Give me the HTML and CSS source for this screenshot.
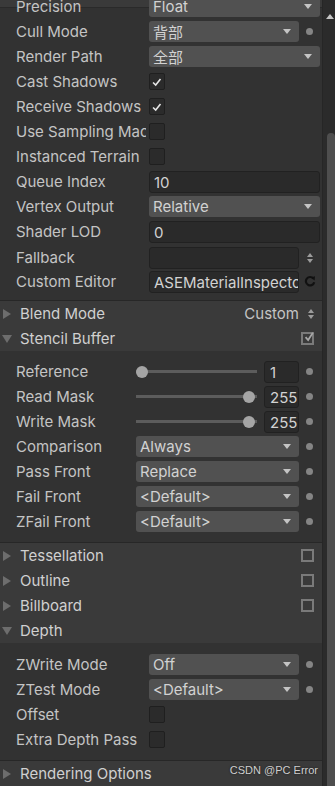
FILE: index.html
```html
<!DOCTYPE html>
<html lang="en">
<head>
  <meta charset="UTF-8">
  <meta name="viewport" content="width=device-width, initial-scale=1.0">
  <title>Shader Options</title>
  <link rel="stylesheet" href="styles.css">
</head>
<body>
  <div class="inspector">
    <div class="panel">
      <div class="section top">
        <div class="row"><span class="label">Precision</span><div class="dropdown"><span>Float</span></div></div>
        <div class="row"><span class="label">Cull Mode</span><div class="dropdown"><span class="cjk">背部</span></div><span class="dot-slot"><i class="dot"></i></span></div>
        <div class="row"><span class="label">Render Path</span><div class="dropdown"><span class="cjk">全部</span></div></div>
        <div class="row"><span class="label">Cast Shadows</span><span class="check on"><svg viewBox="0 0 16 16" width="14" height="14"><polyline points="3.5,8.5 6.5,11.5 12,4.5" /></svg></span></div>
        <div class="row"><span class="label">Receive Shadows</span><span class="check on"><svg viewBox="0 0 16 16" width="14" height="14"><polyline points="3.5,8.5 6.5,11.5 12,4.5" /></svg></span></div>
        <div class="row"><span class="label">Use Sampling Macros</span><span class="check"></span></div>
        <div class="row"><span class="label">Instanced Terrain</span><span class="check"></span></div>
        <div class="row"><span class="label">Queue Index</span><div class="textfield">10</div></div>
        <div class="row"><span class="label">Vertex Output</span><div class="dropdown"><span>Relative</span></div></div>
        <div class="row"><span class="label">Shader LOD</span><div class="textfield">0</div></div>
        <div class="row low"><span class="label">Fallback</span><div class="textfield"></div><span class="dot-slot"><i class="updown"></i></span></div>
        <div class="row"><span class="label">Custom Editor</span><div class="textfield">ASEMaterialInspector</div>
          <span class="dot-slot">
            <svg class="refresh" viewBox="0 0 12 12" width="12" height="12"><path d="M9.4 3.6 A4.2 4.2 0 1 0 10.2 7.2" /><polygon points="6.8,2.4 11,1.2 10.6,5.6" /></svg>
          </span>
        </div>
      </div>

      <div class="foldout-head"><i class="tri right"></i><span class="head-label">Blend Mode</span><span class="head-value">Custom <i class="updown"></i></span></div>
      <div class="foldout-head"><i class="tri down"></i><span class="head-label">Stencil Buffer</span>
        <span class="head-check"><svg viewBox="0 0 14 14" width="13" height="13"><polyline points="3,6.5 6,10 11.5,1.5" /></svg></span>
      </div>
      <div class="section stencil">
        <div class="row"><span class="label">Reference</span><div class="slider"><i class="thumb" style="margin-left: 0%"></i></div><div class="textfield small">1</div><span class="dot-slot"><i class="dot"></i></span></div>
        <div class="row"><span class="label">Read Mask</span><div class="slider"><i class="thumb" style="margin-left: 100%"></i></div><div class="textfield small">255</div><span class="dot-slot"><i class="dot"></i></span></div>
        <div class="row"><span class="label">Write Mask</span><div class="slider"><i class="thumb" style="margin-left: 100%"></i></div><div class="textfield small">255</div><span class="dot-slot"><i class="dot"></i></span></div>
        <div class="row"><span class="label">Comparison</span><div class="dropdown"><span>Always</span></div><span class="dot-slot"><i class="dot"></i></span></div>
        <div class="row"><span class="label">Pass Front</span><div class="dropdown"><span>Replace</span></div><span class="dot-slot"><i class="dot"></i></span></div>
        <div class="row"><span class="label">Fail Front</span><div class="dropdown"><span>&lt;Default&gt;</span></div><span class="dot-slot"><i class="dot"></i></span></div>
        <div class="row"><span class="label">ZFail Front</span><div class="dropdown"><span>&lt;Default&gt;</span></div><span class="dot-slot"><i class="dot"></i></span></div>
      </div>

      <div class="foldout-head first"><i class="tri right"></i><span class="head-label">Tessellation</span><span class="head-check"></span></div>
      <div class="foldout-head"><i class="tri right"></i><span class="head-label">Outline</span><span class="head-check"></span></div>
      <div class="foldout-head"><i class="tri right"></i><span class="head-label">Billboard</span><span class="head-check"></span></div>
      <div class="foldout-head"><i class="tri down"></i><span class="head-label">Depth</span></div>
      <div class="section depth">
        <div class="row"><span class="label">ZWrite Mode</span><div class="dropdown"><span>Off</span></div><span class="dot-slot"><i class="dot"></i></span></div>
        <div class="row"><span class="label">ZTest Mode</span><div class="dropdown"><span>&lt;Default&gt;</span></div><span class="dot-slot"><i class="dot"></i></span></div>
        <div class="row"><span class="label">Offset</span><span class="check"></span></div>
        <div class="row"><span class="label">Extra Depth Pass</span><span class="check"></span></div>
      </div>

      <div class="foldout-head first"><i class="tri right"></i><span class="head-label">Rendering Options</span></div>
    </div>

    <div class="scrollbar">
      <i class="scroll-up"></i>
      <div class="scroll-thumb"></div>
    </div>
  </div>

  <div class="watermark">CSDN @PC Error</div>
</body>
</html>
```

FILE: styles.css
```css
html, body {
  margin: 0;
  padding: 0;
  height: 100%;
  overflow: hidden;
}
body {
  background-color: #323232;
  color: #c4c4c4;
  font-family: "Inter", "Noto Sans", sans-serif;
  font-size: 15px;
}
.cjk {
  font-family: "Noto Sans CJK SC", sans-serif;
}
.inspector {
  display: flex;
  height: 100%;
}
.panel {
  width: 322px;
  flex: none;
}
.section {
  background-color: #323232;
  border-bottom: 1px solid #272727;
}
.section.top {
  margin-top: -6px;
  padding-bottom: 6px;
  background: linear-gradient(#3a3a3a 0 13px, #2a2a2a 13px 14px, #323232 14px);
}
.section.stencil {
  padding: 8px 0;
}
.section.stencil .label {
  width: 117px;
}
.section.depth {
  padding: 9px 0 8px;
}
.row {
  display: flex;
  align-items: center;
  height: 25px;
  padding: 0 2px 0 16px;
}
.row.low {
  padding-top: 2px;
  height: 23px;
}
.label {
  width: 130px;
  margin-right: 3px;
  flex: none;
  overflow: hidden;
  white-space: nowrap;
}
.dropdown {
  flex: 1;
  height: 21px;
  display: flex;
  align-items: center;
  padding-left: 4px;
  background-color: #515151;
  border-radius: 3px;
  color: #d2d2d2;
  box-sizing: border-box;
  overflow: hidden;
  white-space: nowrap;
}
.dropdown::after {
  content: '';
  margin-left: auto;
  margin-right: 8px;
  border-top: 5px solid #c4c4c4;
  border-left: 4.5px solid transparent;
  border-right: 4.5px solid transparent;
}
.textfield {
  flex: 1;
  height: 22px;
  line-height: 21px;
  padding-left: 4px;
  background-color: #2a2a2a;
  border: 1px solid #212121;
  border-radius: 3px;
  box-sizing: border-box;
  color: #d2d2d2;
  overflow: hidden;
  white-space: nowrap;
}
.textfield.small {
  flex: none;
  width: 35px;
  padding-left: 5px;
}
.dot-slot {
  width: 21px;
  flex: none;
  display: flex;
  justify-content: center;
  align-items: center;
}
.dot {
  width: 7px;
  height: 7px;
  border-radius: 50%;
  background-color: #858585;
}
.updown {
  display: inline-flex;
  flex-direction: column;
  gap: 2px;
  vertical-align: middle;
}
.updown::before, .updown::after {
  content: '';
  border-left: 3.5px solid transparent;
  border-right: 3.5px solid transparent;
}
.updown::before {
  border-bottom: 4px solid #9c9c9c;
}
.updown::after {
  border-top: 4px solid #9c9c9c;
}
.refresh {
  fill: none;
  stroke: #111;
  stroke-width: 2.2;
  margin-top: -2px;
}
.refresh polygon {
  fill: #111;
  stroke: none;
}
.check {
  width: 16px;
  height: 17px;
  box-sizing: border-box;
  background-color: #2b2b2b;
  border: 1px solid #1f1f1f;
  border-radius: 2px;
  display: flex;
  align-items: center;
  justify-content: center;
}
.check svg polyline {
  fill: none;
  stroke: #e6e6e6;
  stroke-width: 1.8;
}
.slider {
  flex: 1;
  height: 3px;
  margin-right: 7px;
  background-color: #5c5c5c;
  display: flex;
  align-items: center;
  padding: 0 8px 0 6px;
  box-sizing: border-box;
}
.thumb {
  width: 12px;
  height: 12px;
  flex: none;
  margin-right: -12px;
  transform: translateX(-6px);
  border-radius: 50%;
  background-color: #a5a5a5;
}
.foldout-head {
  height: 25px;
  display: flex;
  align-items: center;
  padding: 0 8px 0 2px;
  background-color: #3a3a3a;
  color: #d0d0d0;
}
.tri {
  width: 0;
  height: 0;
  flex: none;
}
.tri.right {
  margin-left: 1px;
  border-left: 8px solid #6d6d6d;
  border-top: 5px solid transparent;
  border-bottom: 5px solid transparent;
}
.tri.down {
  border-top: 8px solid #6d6d6d;
  border-left: 5px solid transparent;
  border-right: 5px solid transparent;
}
.head-label {
  margin-left: 9px;
}
.tri.down + .head-label {
  margin-left: 8px;
}
.head-value {
  margin-left: auto;
  color: #c4c4c4;
  display: flex;
  align-items: center;
  gap: 9px;
}
.head-check {
  margin-left: auto;
  width: 13px;
  height: 13px;
  box-sizing: border-box;
  border: 2px solid #7a7a7a;
  display: flex;
  align-items: center;
  justify-content: center;
}
.head-check svg {
  margin-top: -3px;
  margin-right: -3px;
}
.head-check polyline {
  fill: none;
  stroke: #a8a8a8;
  stroke-width: 2;
}
.scrollbar {
  width: 13px;
  flex: none;
  box-sizing: border-box;
  background-color: #2b2b2b;
  border-left: 1px solid #262626;
  display: flex;
  flex-direction: column;
  align-items: flex-end;
}
.scroll-up {
  margin-top: 14px;
  margin-right: 1px;
  border-bottom: 5px solid #c6c6c6;
  border-left: 4px solid transparent;
  border-right: 4px solid transparent;
}
.scroll-thumb {
  margin-top: 114px;
  flex: 1;
  width: 8px;
  background-color: #4e4e4e;
  border-radius: 4px 4px 0 0;
}
.watermark {
  position: absolute;
  right: 17px;
  top: 764px;
  font-family: "Liberation Sans", sans-serif;
  font-size: 11px;
  color: #cfcfcf;
  text-shadow: 0 0 2px #1a1a1a;
}
```
